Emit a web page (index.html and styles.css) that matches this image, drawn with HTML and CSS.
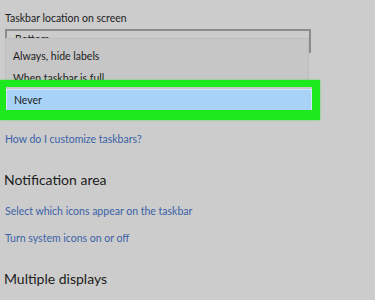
FILE: index.html
```html
<!DOCTYPE html>
<html lang="en">
<head>
    <meta charset="UTF-8">
    <title>Taskbar settings</title>
    <link rel="stylesheet" href="styles.css">
</head>
<body>
    <div class="panel">
        <div class="field-label">Taskbar location on screen</div>
        <div class="select-wrap">
            <div class="select-box">
                <span>Bottom</span>
                <span class="chevron">&#8964;</span>
            </div>
            <ul class="dropdown">
                <li>Always, hide labels</li>
                <li>When taskbar is full</li>
                <li class="selected">Never</li>
            </ul>
            <div class="highlight"></div>
        </div>

        <a class="link" href="#">How do I customize taskbars?</a>

        <h2 class="section-title">Notification area</h2>
        <a class="link" href="#">Select which icons appear on the taskbar</a>
        <a class="link" href="#">Turn system icons on or off</a>

        <h2 class="section-title">Multiple displays</h2>
    </div>
</body>
</html>
```

FILE: styles.css
```css
/* 全局样式 */
:root {
    --bg: #cccccc;
    --menu-bg: #c6c6c6;
    --text: #1c1c1c;
    --link: #3a62a6;
    --select-blue: #a8d3f7;
    --green: #1ee81e;
}

* {
    margin: 0;
    padding: 0;
    box-sizing: border-box;
}

body {
    font-family: Lato, "Open Sans", Arial, sans-serif;
    background: var(--bg);
    color: var(--text);
    width: 375px;
    height: 300px;
    overflow: hidden;
}

.panel {
    display: flex;
    flex-direction: column;
    align-items: flex-start;
    padding: 10px 0 0 5px;
}

.field-label {
    font-size: 10.5px;
    line-height: 16px;
}

/* 下拉框 */
.select-wrap {
    position: relative;
    width: 306px;
    margin-top: 3px;
    height: 102px;
}

.select-box {
    display: flex;
    justify-content: space-between;
    height: 24px;
    border: 2px solid #8c8c8c;
    padding: 2px 8px;
    font-size: 10.5px;
}

.chevron {
    font-size: 9px;
    color: #666;
}

.dropdown {
    position: absolute;
    top: 9px;
    left: 0;
    width: 304px;
    list-style: none;
    background: var(--menu-bg);
    border: 1px solid #bdbdbd;
    padding-top: 6px;
    font-size: 10.5px;
}

.dropdown li {
    height: 22px;
    line-height: 22px;
    padding-left: 7px;
}

.dropdown li.selected {
    background: var(--select-blue);
    border: 1px solid #d2e8fa;
    width: 306px;
    line-height: 20px;
}

/* 绿色标注框 */
.highlight {
    position: absolute;
    top: 51px;
    left: -5px;
    width: 320px;
    height: 40px;
    border-style: solid;
    border-color: var(--green);
    border-width: 7px 8px 10px 6px;
    box-shadow: 0 0 2px rgba(30, 232, 30, 0.6);
}

/* 链接与标题 */
.link {
    color: var(--link);
    text-decoration: none;
    font-size: 10.5px;
    line-height: 16px;
    margin-bottom: 11px;
}

.section-title {
    font-weight: normal;
    font-size: 14px;
    line-height: 20px;
    margin: 12px 0 13px -1px;
}
```
